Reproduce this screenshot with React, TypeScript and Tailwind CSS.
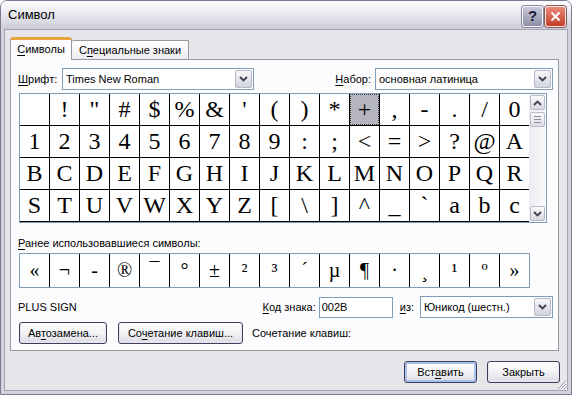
import React from "react";

const gridRows = [
  [" ", "!", '"', "#", "$", "%", "&", "'", "(", ")", "*", "+", ",", "-", ".", "/", "0"],
  ["1", "2", "3", "4", "5", "6", "7", "8", "9", ":", ";", "<", "=", ">", "?", "@", "A"],
  ["B", "C", "D", "E", "F", "G", "H", "I", "J", "K", "L", "M", "N", "O", "P", "Q", "R"],
  ["S", "T", "U", "V", "W", "X", "Y", "Z", "[", "\\", "]", "^", "_", "`", "a", "b", "c"],
];

const recent = ["«", "¬", "-", "®", "¯", "°", "±", "²", "³", "´", "µ", "¶", "·", "¸", "¹", "º", "»"];

function Chevron({ up }: { up?: boolean }) {
  return (
    <svg width="9" height="6" viewBox="0 0 9 6">
      <polyline
        points={up ? "1,5 4.5,1.5 8,5" : "1,1 4.5,4.5 8,1"}
        fill="none"
        stroke="#3f3f4f"
        strokeWidth="1.8"
      />
    </svg>
  );
}

function DropBtn() {
  return (
    <div className="flex h-[18px] w-[17px] shrink-0 items-center justify-center rounded-[2px] border border-[#b3b9c9] bg-gradient-to-b from-[#f8f8fb] to-[#d3d3de]">
      <Chevron />
    </div>
  );
}

function Combo({ value, className }: { value: string; className: string }) {
  return (
    <div className={`flex h-[22px] items-center border border-[#7f9db9] bg-white pl-[3px] pr-[1px] ${className}`}>
      <span className="flex-1 truncate">{value}</span>
      <DropBtn />
    </div>
  );
}

function Btn({ children, className, isDefault }: { children: React.ReactNode; className: string; isDefault?: boolean }) {
  return (
    <div
      className={`flex h-[22px] items-center justify-center rounded-[3px] border border-[#3d3d5c] bg-gradient-to-b from-[#ffffff] via-[#f3f3f6] to-[#d9d9e2] ${
        isDefault ? "shadow-[inset_0_0_0_2px_#a8c1ec]" : "shadow-[inset_0_-1px_0_1px_#e4e4ea]"
      } ${className}`}
    >
      {children}
    </div>
  );
}

export default function App() {
  return (
    <div className="relative flex h-[395px] w-[572px] flex-col overflow-hidden rounded-t-[7px] border border-[#7a7a92] bg-gradient-to-b from-[#fbfbfd] to-[#d6d6e0] font-['Liberation_Sans',Arial,sans-serif] text-[11px] text-black">
      {/* Title bar */}
      <div className="flex h-[28px] shrink-0 items-center bg-gradient-to-b from-[#fdfdfe] via-[#e6e6ee] to-[#cdcdd9] pl-[7px] pr-[5px]">
        <span className="text-[13px]">Символ</span>
        <div className="ml-auto mt-[3px] flex gap-[2px]">
          <div className="flex h-[21px] w-[21px] items-center justify-center rounded-[3px] border border-[#f4f4f8] bg-gradient-to-b from-[#c9c9d8] to-[#8f8fa8] text-[15px] font-bold text-[#1b1b3a] shadow-[0_0_0_1px_#8a8aa0]">
            ?
          </div>
          <div className="flex h-[21px] w-[21px] items-center justify-center rounded-[3px] border border-[#f8e8e4] bg-gradient-to-b from-[#e98a78] to-[#c43a28] shadow-[0_0_0_1px_#8a5a58]">
            <svg width="11" height="11" viewBox="0 0 11 11">
              <path d="M1.5 1.5 L9.5 9.5 M9.5 1.5 L1.5 9.5" stroke="white" strokeWidth="2" />
            </svg>
          </div>
        </div>
      </div>

      {/* Frame + client */}
      <div className="flex flex-1 flex-col border-x-[3px] border-b-[3px] border-[#d3d3dd]">
        <div className="flex flex-1 flex-col border border-[#a4a4b6] bg-[#e6e5ea]">
          {/* Tabs */}
          <div className="relative z-10 ml-[5px] mt-[7px] flex h-[22px] items-end">
            <div className="-mb-px flex h-[23px] w-[62px] items-center justify-center rounded-t-[3px] border-x border-t-[3px] border-[#919b9c] border-t-[#e9a53f] bg-[#fcfcfe] pb-[2px]">
              <span>
                <u className="underline-offset-2">С</u>имволы
              </span>
            </div>
            <div className="flex h-[19px] w-[117px] items-center justify-center rounded-t-[2px] border-r border-t border-[#919b9c] bg-gradient-to-b from-[#ffffff] to-[#ececf1]">
              <span>
                С<u className="underline-offset-2">п</u>ециальные знаки
              </span>
            </div>
          </div>

          {/* Panel */}
          <div className="ml-[5px] mr-[8px] flex h-[292px] flex-col border border-[#919b9c] bg-[#fcfcfe] pl-[7px] pr-[5px] pt-[8px]">
            <div className="flex h-[22px] items-center">
              <span className="w-[44px]">
                <u className="underline-offset-2">Ш</u>рифт:
              </span>
              <Combo value="Times New Roman" className="w-[192px]" />
              <span className="ml-auto mr-[4px]">
                <u className="underline-offset-2">Н</u>абор:
              </span>
              <Combo value="основная латиница" className="w-[178px]" />
            </div>

            {/* Character grid */}
            <div className="ml-[1px] mt-[3px] flex w-max border border-[#7f9db9]">
              <div className="grid grid-cols-[repeat(17,29px)] gap-px bg-black pb-px">
                {gridRows.flat().map((c, i) => (
                  <div
                    key={i}
                    className={`flex h-[31px] items-center justify-center font-['Liberation_Serif','Times_New_Roman',serif] text-[24px] leading-[31px] ${
                      c === "+" ? "bg-[#b5b5c0]" : "bg-white"
                    }`}
                  >
                    {c === "+" ? (
                      <div className="flex h-full w-full items-center justify-center border border-dotted border-[#444]">+</div>
                    ) : (
                      c
                    )}
                  </div>
                ))}
              </div>
              <div className="flex w-[17px] flex-col bg-gradient-to-r from-[#ededf1] to-[#fafafc] p-px">
                <div className="flex h-[15px] items-center justify-center rounded-[2px] border border-[#b6bccb] bg-gradient-to-b from-[#fbfbfd] to-[#d8d8e2]">
                  <Chevron up />
                </div>
                <div className="mt-[2px] flex h-[15px] flex-col items-center justify-center gap-[2px] rounded-[2px] border border-[#b6bccb] bg-gradient-to-b from-[#fbfbfd] to-[#dcdce5]">
                  <div className="h-px w-[7px] bg-[#8c8ca0]" />
                  <div className="h-px w-[7px] bg-[#8c8ca0]" />
                  <div className="h-px w-[7px] bg-[#8c8ca0]" />
                </div>
                <div className="mt-auto flex h-[15px] items-center justify-center rounded-[2px] border border-[#b6bccb] bg-gradient-to-b from-[#fbfbfd] to-[#d8d8e2]">
                  <Chevron />
                </div>
              </div>
            </div>

            <div className="mt-[13px] h-[14px] leading-[14px]">
              <u className="underline-offset-2">Р</u>анее использовавшиеся символы:
            </div>

            {/* Recently used */}
            <div className="ml-[1px] mt-[3px] w-max border border-[#7f9db9]">
              <div className="grid grid-cols-[repeat(17,29px)] gap-px bg-black">
                {recent.map((c, i) => (
                  <div
                    key={i}
                    className="flex h-[33px] items-center justify-center bg-white font-['Liberation_Serif','Times_New_Roman',serif] text-[20px] leading-[33px]"
                  >
                    {c}
                  </div>
                ))}
              </div>
            </div>

            {/* Name / code row */}
            <div className="mt-[8px] flex h-[22px] items-center">
              <span className="flex-1">PLUS SIGN</span>
              <span>
                <u className="underline-offset-2">К</u>од знака:
              </span>
              <div className="ml-[3px] flex h-[21px] w-[74px] items-center border border-[#7f9db9] bg-white pl-[2px]">002B</div>
              <span className="ml-[7px]">
                <u className="underline-offset-2">и</u>з:
              </span>
              <Combo value="Юникод (шестн.)" className="ml-[6px] w-[133px]" />
            </div>

            <div className="mt-[4px] flex h-[22px] items-center">
              <Btn className="ml-[1px] w-[88px]">
                <span>
                  Ав<u className="underline-offset-2">т</u>озамена...
                </span>
              </Btn>
              <Btn className="ml-[11px] w-[125px]">
                <span>
                  Со<u className="underline-offset-2">ч</u>етание клавиш...
                </span>
              </Btn>
              <span className="ml-[9px]">Сочетание клавиш:</span>
            </div>
          </div>

          {/* Dialog buttons */}
          <div className="mr-[7px] mt-[10px] flex justify-end gap-[10px]">
            <Btn className="w-[73px]" isDefault>
              <span>
                Вст<u className="underline-offset-2">а</u>вить
              </span>
            </Btn>
            <Btn className="w-[73px]">Закрыть</Btn>
          </div>
        </div>
      </div>

      {/* Resize grip */}
      <svg className="absolute bottom-[4px] right-[4px]" width="12" height="12" viewBox="0 0 12 12">
        <path d="M11 3 L3 11 M11 6 L6 11 M11 9 L9 11" stroke="#9a9aac" strokeWidth="1" />
        <path d="M11 4 L4 11 M11 7 L7 11 M11 10 L10 11" stroke="#ffffff" strokeWidth="1" />
      </svg>
    </div>
  );
}
